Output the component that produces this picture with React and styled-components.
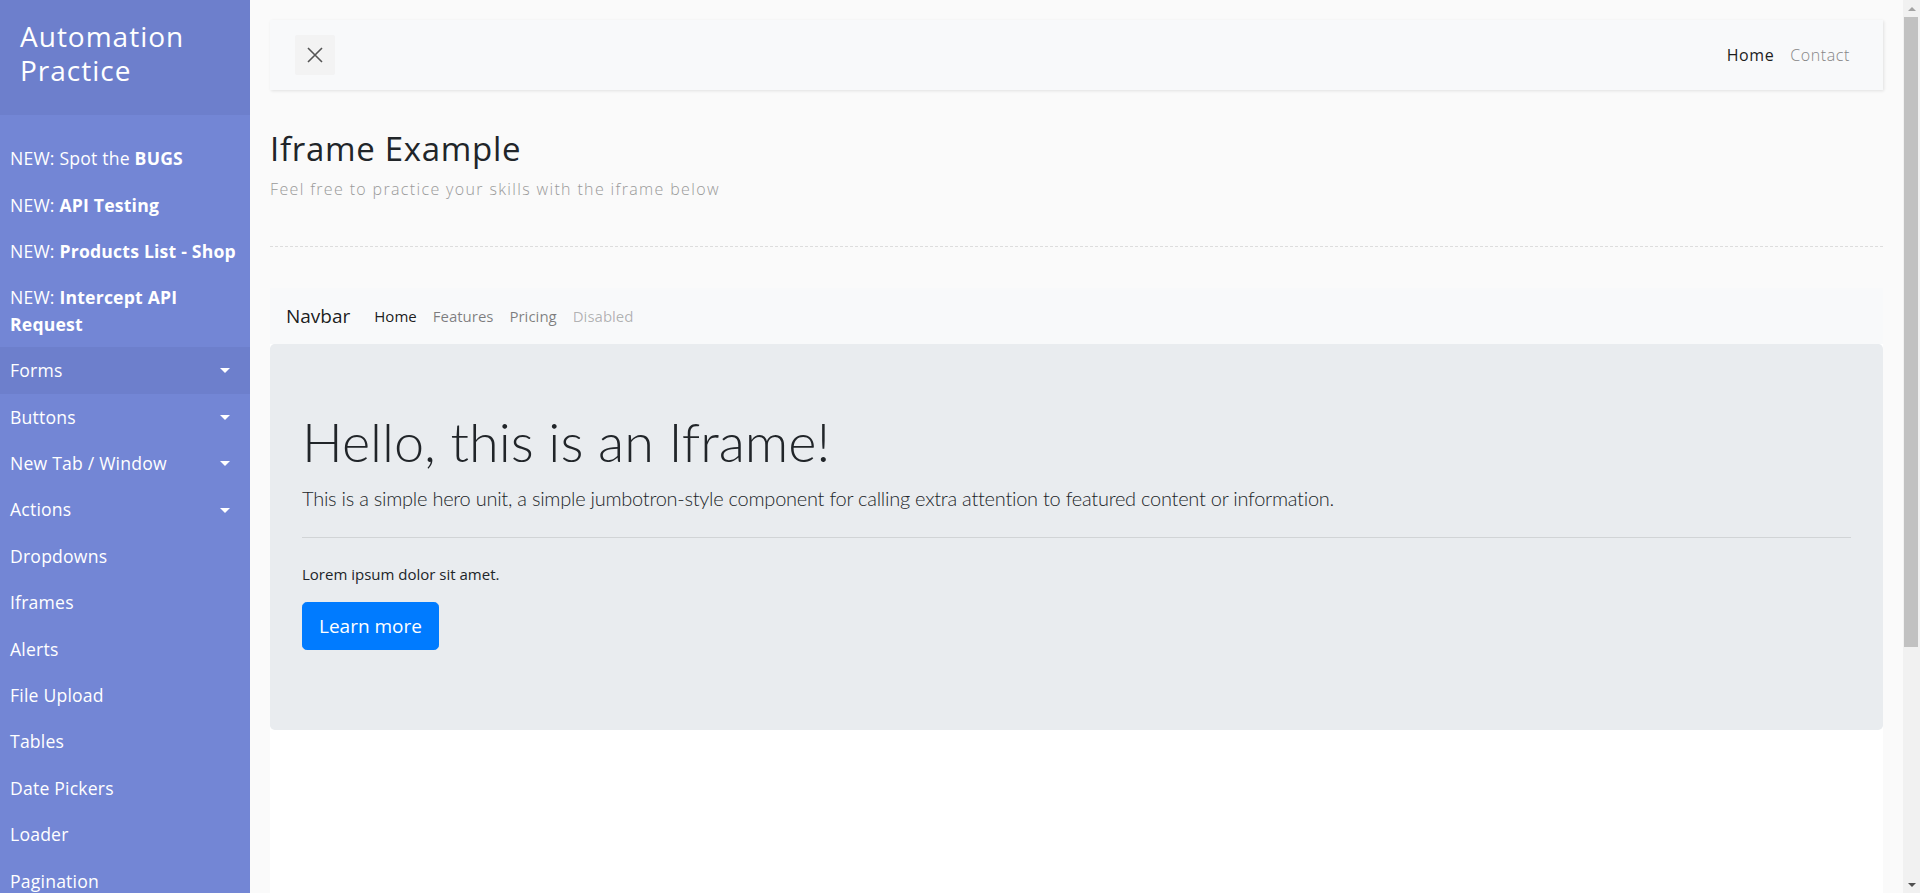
import styled, { createGlobalStyle } from "styled-components";

const GlobalStyle = createGlobalStyle`
  body {
    margin: 0;
    font-family: "Open Sans", "Noto Sans", sans-serif;
    background: #fafafa;
    color: #212529;
  }
  * {
    box-sizing: border-box;
  }
`;

const Wrapper = styled.div`
  display: flex;
  align-items: stretch;
  margin-right: 17px;
`;

const Sidebar = styled.nav`
  width: 250px;
  min-width: 250px;
  background: #7386d5;
  color: #fff;
`;

const SidebarHeader = styled.div`
  padding: 20px;
  background: #6d7fcc;

  h3 {
    margin: 0 0 8px;
    font-size: 28px;
    font-weight: 500;
    line-height: 33.6px;
    letter-spacing: 1px;
  }
`;

const Menu = styled.ul`
  list-style: none;
  margin: 0;
  padding: 20px 0;
`;

const MenuItem = styled.li`
  position: relative;
  background: ${(props) => (props.active ? "#6d7fcc" : "transparent")};

  a {
    display: block;
    padding: 10px;
    font-size: 17.6px;
    line-height: 26.4px;
    color: #fff;
    text-decoration: none;
    white-space: nowrap;
    letter-spacing: 0.2px;
  }

  b {
    font-weight: 700;
  }
`;

const Caret = styled.span`
  position: absolute;
  right: 20px;
  top: 50%;
  margin-top: -2px;
  width: 0;
  height: 0;
  border-left: 5px solid transparent;
  border-right: 5px solid transparent;
  border-top: 5px solid #fff;
`;

const Content = styled.main`
  flex: 1;
  padding: 20px;
  min-width: 0;
`;

const TopBar = styled.div`
  display: flex;
  align-items: center;
  justify-content: space-between;
  padding: 15px 25px;
  background: #f8f9fa;
  box-shadow: 1px 1px 3px rgba(0, 0, 0, 0.1);
  margin-bottom: 40px;
`;

const CloseButton = styled.button`
  display: flex;
  align-items: center;
  justify-content: center;
  width: 40px;
  height: 40px;
  border: none;
  border-radius: 2px;
  background: #f3f3f3;
  padding: 0;
`;

const TopLinks = styled.div`
  display: flex;
`;

const TopLink = styled.a`
  padding: 8px;
  font-size: 16px;
  letter-spacing: 0.6px;
  font-weight: ${(props) => (props.active ? 400 : 300)};
  color: ${(props) => (props.active ? "#1d1d1d" : "#868686")};
  text-decoration: none;
`;

const Title = styled.h2`
  margin: 0 0 8px;
  font-size: 33px;
  font-weight: 500;
  line-height: 38.4px;
  letter-spacing: 0.7px;
  color: #212529;
`;

const Subtitle = styled.p`
  margin: 0;
  font-size: 16px;
  font-weight: 300;
  line-height: 27.2px;
  letter-spacing: 1.35px;
  color: #999;
`;

const DashedLine = styled.div`
  height: 1px;
  border-bottom: 1px dashed #ddd;
  margin: 42px 0 41px;
`;

const Frame = styled.div`
  height: 911px;
  background: #fff;
  font-family: "Open Sans", "Noto Sans", sans-serif;
  color: #212529;
`;

const FrameNav = styled.div`
  display: flex;
  align-items: center;
  padding: 8px 16px;
  background: #f8f9fa;
`;

const Brand = styled.span`
  font-size: 19px;
  line-height: 30px;
  padding: 5px 0;
  margin-right: 16px;
  color: rgba(0, 0, 0, 0.9);
`;

const FrameLink = styled.a`
  padding: 8px;
  font-size: 15px;
  line-height: 24px;
  color: ${(props) => props.color};
  text-decoration: none;
`;

const Jumbotron = styled.div`
  padding: 64px 32px 56px;
  margin-bottom: 32px;
  background: #e9ecef;
  border-radius: 4.8px;
`;

const Display = styled.h1`
  margin: 0 0 8px;
  font-family: Lato, "Open Sans", sans-serif;
  font-size: 54px;
  font-weight: 300;
  line-height: 67.2px;
`;

const Lead = styled.p`
  margin: 0 0 24px;
  font-family: Lato, "Open Sans", sans-serif;
  font-size: 20px;
  font-weight: 300;
  line-height: 30px;
  letter-spacing: -0.25px;
`;

const Rule = styled.hr`
  margin: 0 0 24px;
  border: 0;
  border-top: 1px solid rgba(0, 0, 0, 0.1);
`;

const Text = styled.p`
  margin: 0 0 16px;
  font-size: 15px;
  line-height: 24px;
`;

const ButtonRow = styled.div`
  margin-bottom: 24px;
`;

const LearnButton = styled.a`
  display: inline-block;
  padding: 8px 16px;
  font-size: 19px;
  line-height: 30px;
  color: #fff;
  background: #007bff;
  border: 1px solid #007bff;
  border-radius: 4.8px;
  text-decoration: none;
`;

const ScrollTrack = styled.div`
  position: fixed;
  top: 0;
  right: 0;
  width: 17px;
  height: 100vh;
  display: flex;
  flex-direction: column;
  background: #f1f1f1;
`;

const ScrollArrow = styled.div`
  height: 17px;
  display: flex;
  align-items: center;
  justify-content: center;

  &::after {
    content: "";
    border-left: 4px solid transparent;
    border-right: 4px solid transparent;
    ${(props) =>
      props.down
        ? "border-top: 4px solid #505050;"
        : "border-bottom: 4px solid #a3a3a3;"}
  }
`;

const ScrollThumb = styled.div`
  height: 630px;
  margin: 0 2px 0 1px;
  background: #c1c1c1;
`;

const ScrollSpace = styled.div`
  flex: 1;
`;

const menu = [
  { pre: "NEW: Spot the ", bold: "BUGS" },
  { pre: "NEW: ", bold: "API Testing" },
  { pre: "NEW: ", bold: "Products List - Shop" },
  { pre: "NEW: ", bold: "Intercept API", rest: "Request" },
  { label: "Forms", caret: true, active: true },
  { label: "Buttons", caret: true },
  { label: "New Tab / Window", caret: true },
  { label: "Actions", caret: true },
  { label: "Dropdowns" },
  { label: "Iframes" },
  { label: "Alerts" },
  { label: "File Upload" },
  { label: "Tables" },
  { label: "Date Pickers" },
  { label: "Loader" },
  { label: "Pagination" },
  { label: "Sliders" },
  { label: "Scroll" },
  { label: "Hover" },
  { label: "Drag & Drop" },
  { label: "Shadow DOM" },
];

function CloseIcon() {
  return (
    <svg width="18" height="18" viewBox="0 0 18 18">
      <path d="M2 2 L16 16 M16 2 L2 16" stroke="#555" strokeWidth="1.6" />
    </svg>
  );
}

export default function App() {
  return (
    <>
      <GlobalStyle />
      <Wrapper>
        <Sidebar>
          <SidebarHeader>
            <h3>
              Automation
              <br />
              Practice
            </h3>
          </SidebarHeader>
          <Menu>
            {menu.map((item, i) => (
              <MenuItem key={i} active={item.active}>
                <a href="#">
                  {item.label}
                  {item.pre}
                  {item.bold && <b>{item.bold}</b>}
                  {item.rest && (
                    <>
                      <br />
                      <b>{item.rest}</b>
                    </>
                  )}
                </a>
                {item.caret && <Caret />}
              </MenuItem>
            ))}
          </Menu>
        </Sidebar>
        <Content>
          <TopBar>
            <CloseButton>
              <CloseIcon />
            </CloseButton>
            <TopLinks>
              <TopLink href="#" active>
                Home
              </TopLink>
              <TopLink href="#">Contact</TopLink>
            </TopLinks>
          </TopBar>
          <Title>Iframe Example</Title>
          <Subtitle>Feel free to practice your skills with the iframe below</Subtitle>
          <DashedLine />
          <Frame>
            <FrameNav>
              <Brand>Navbar</Brand>
              <FrameLink href="#" color="rgba(0,0,0,0.9)">
                Home
              </FrameLink>
              <FrameLink href="#" color="rgba(0,0,0,0.5)">
                Features
              </FrameLink>
              <FrameLink href="#" color="rgba(0,0,0,0.5)">
                Pricing
              </FrameLink>
              <FrameLink href="#" color="rgba(0,0,0,0.3)">
                Disabled
              </FrameLink>
            </FrameNav>
            <Jumbotron>
              <Display>Hello, this is an Iframe!</Display>
              <Lead>
                This is a simple hero unit, a simple jumbotron-style component for calling extra
                attention to featured content or information.
              </Lead>
              <Rule />
              <Text>Lorem ipsum dolor sit amet.</Text>
              <ButtonRow>
                <LearnButton href="#">Learn more</LearnButton>
              </ButtonRow>
            </Jumbotron>
          </Frame>
        </Content>
      </Wrapper>
      <ScrollTrack>
        <ScrollArrow />
        <ScrollThumb />
        <ScrollSpace />
        <ScrollArrow down />
      </ScrollTrack>
    </>
  );
}
